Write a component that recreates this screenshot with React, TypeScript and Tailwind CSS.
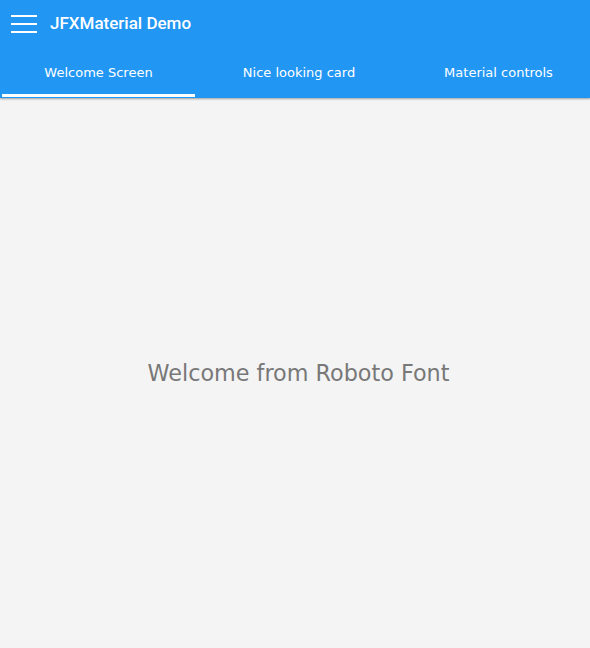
export default function App() {
  const tabs = [
    { label: "Welcome Screen", w: "w-[197px]", active: true },
    { label: "Nice looking card", w: "w-[204px]", active: false },
    { label: "Material controls", w: "flex-1 pl-[6px]", active: false },
  ]

  return (
    <div className="flex h-[648px] w-[590px] flex-col bg-[#f4f4f4]">
      <div className="bg-[#2196f3] shadow-[0_1px_2px_rgba(0,0,0,0.35)]">
        <div className="flex h-[46px] items-center">
          <button className="ml-[11px] flex w-[26px] flex-col gap-[6px] pt-[1px]">
            <span className="h-[2px] w-full bg-white" />
            <span className="h-[2px] w-full bg-white" />
            <span className="h-[2px] w-full bg-white" />
          </button>
          <span className="ml-[13px] pt-[1px] font-['Roboto',sans-serif] text-[17px] font-medium text-white">
            JFXMaterial Demo
          </span>
        </div>
        <div className="flex h-[52px]">
          {tabs.map((tab) => (
            <div key={tab.label} className={`${tab.w} flex flex-col`}>
              <div className="flex flex-1 items-center justify-center pt-[6px] font-['DejaVu_Sans',sans-serif] text-[13px] text-white">
                {tab.label}
              </div>
              <div className={`mx-[2px] mb-[1px] h-[3px] ${tab.active ? "bg-white" : "bg-transparent"}`} />
            </div>
          ))}
        </div>
      </div>
      <div className="flex flex-1 items-center justify-center pt-[1px] pl-[7px] font-['DejaVu_Sans',sans-serif] text-[22.3px] text-[#787878]">
        Welcome from Roboto Font
      </div>
    </div>
  )
}
